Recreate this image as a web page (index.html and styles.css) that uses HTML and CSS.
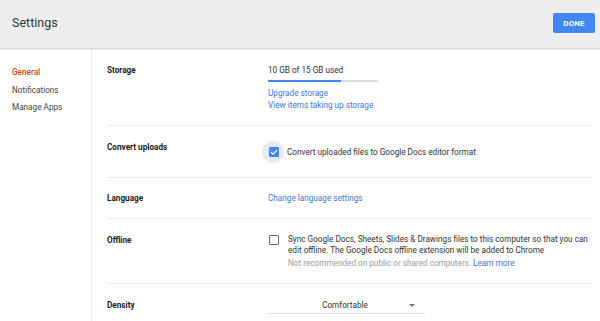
FILE: index.html
```html
<!DOCTYPE html>
<html>
<head>
<meta charset="utf-8">
<link rel="stylesheet" href="styles.css">
</head>
<body>
<header class="topbar">
  <h1 class="title">Settings</h1>
  <button class="done">DONE</button>
</header>
<div class="layout">
  <nav class="sidebar">
    <a class="nav-item active">General</a>
    <a class="nav-item">Notifications</a>
    <a class="nav-item">Manage Apps</a>
  </nav>
  <main class="content">
    <section class="row row-storage">
      <div class="label">Storage</div>
      <div class="value">
        <div class="line">10 GB of 15 GB used</div>
        <div class="bar"><div class="bar-fill" style="width:66.7%"></div></div>
        <a class="link link-first">Upgrade storage</a>
        <a class="link">View items taking up storage</a>
      </div>
    </section>
    <section class="row row-convert">
      <div class="label">Convert uploads</div>
      <div class="value check-row">
        <span class="halo">
          <svg class="cb" width="10" height="10" viewBox="0 0 10 10"><rect x="0" y="0" width="10" height="10" rx="1.2" fill="#4285f4"/><path d="M2.1 5.1 L4.1 7.1 L8 3.1" fill="none" stroke="#fff" stroke-width="1.3"/></svg>
        </span>
        <span class="check-text">Convert uploaded files to Google Docs editor format</span>
      </div>
    </section>
    <section class="row row-lang">
      <div class="label">Language</div>
      <div class="value"><a class="link">Change language settings</a></div>
    </section>
    <section class="row row-offline">
      <div class="label">Offline</div>
      <div class="value offline">
        <span class="box"></span>
        <div class="offline-text">
          <div class="para">Sync Google Docs, Sheets, Slides &amp; Drawings files to this computer so that you can edit offline. The Google Docs offline extension will be added to Chrome</div>
          <div class="note">Not recommended on public or shared computers. <a class="link inline">Learn more</a></div>
        </div>
      </div>
    </section>
    <section class="row row-density">
      <div class="label">Density</div>
      <div class="value">
        <div class="select"><span class="select-text">Comfortable</span><span class="arrow"></span></div>
      </div>
    </section>
  </main>
</div>
</body>
</html>
```
FILE: styles.css
```css
* { box-sizing: border-box; }
html, body { margin: 0; padding: 0; background: #fff; }
body { font-family: Roboto, "Noto Sans", sans-serif; font-size: 8.2px; color: #333; width: 600px; height: 321px; overflow: hidden; }

.topbar {
  height: 49px;
  background: #eeeeee;
  border-bottom: 1px solid #d9d9d9;
  box-shadow: 0 1px 1px rgba(0,0,0,0.06);
  display: flex;
  align-items: center;
  justify-content: space-between;
  padding: 0 5px 0 12px;
  position: relative;
}
.title { margin: 0; font-size: 12.5px; font-weight: 400; color: #333; line-height: 16px; padding-bottom: 2px; }
.done {
  width: 42px; height: 20px; margin-top: -2px;
  background: #4285f4; color: #fff; border: 0; border-radius: 2px;
  font-family: Roboto, sans-serif; font-weight: 700; font-size: 8px; letter-spacing: 0.1px;
  padding: 0;
}

.layout { display: flex; height: 272px; }
.sidebar {
  width: 92px; flex: none;
  border-right: 1px solid #ebebeb;
  padding: 15px 0 0 12px;
  display: flex; flex-direction: column;
}
.nav-item { line-height: 17.7px; color: #444; font-size: 8.2px; }
.nav-item.active { color: #cf3d30; font-weight: 500; }

.content { flex: 1; padding: 0 9px 0 15px; }
.row {
  display: grid;
  grid-template-columns: 161px 1fr;
  border-bottom: 1px solid #ececec;
}
.label { font-weight: 700; color: #222; line-height: 12px; }
.value { line-height: 12px; color: #333; }

.row-storage { padding: 15px 0 14px; }
.line { line-height: 12px; }
.bar { width: 110px; height: 2px; background: #dcdcdc; margin: 4px 0 4.5px; }
.bar-fill { height: 2px; background: #4285f4; }
.link { display: block; color: #3b78db; line-height: 12.3px; }
.link.inline { display: inline; }

.row-convert { padding: 15px 0 14px; }
.check-row { display: flex; align-items: center; height: 22px; }
.halo {
  width: 22px; height: 22px; border-radius: 50%;
  background: #e4ecfa;
  display: flex; align-items: center; justify-content: center;
  margin-left: -6px; margin-right: 3px;
}
.cb { display: block; margin-left: 1px; }
.check-text { color: #333; }

.row-lang { padding: 14px 0 14px; }

.row-offline { padding: 15px 0 13px; }
.offline { display: flex; align-items: flex-start; }
.box {
  width: 10px; height: 10px; border: 1.4px solid #666; border-radius: 1px;
  margin: 0.5px 9px 0 1px; flex: none;
}
.offline-text { width: 304px; line-height: 11.6px; margin-top: -0.5px; }
.para { color: #333; }
.note { color: #9a9a9a; }

.row-density { padding: 15px 0 0; border-bottom: 0; }
.select {
  width: 157px; height: 15px;
  border-bottom: 1px solid #e0e0e0;
  position: relative;
  text-align: center;
  padding-right: 3px;
}
.select-text { color: #333; line-height: 12px; }
.arrow {
  position: absolute; right: 10px; top: 5px;
  width: 0; height: 0;
  border-left: 3px solid transparent; border-right: 3px solid transparent;
  border-top: 3px solid #777;
}
```
